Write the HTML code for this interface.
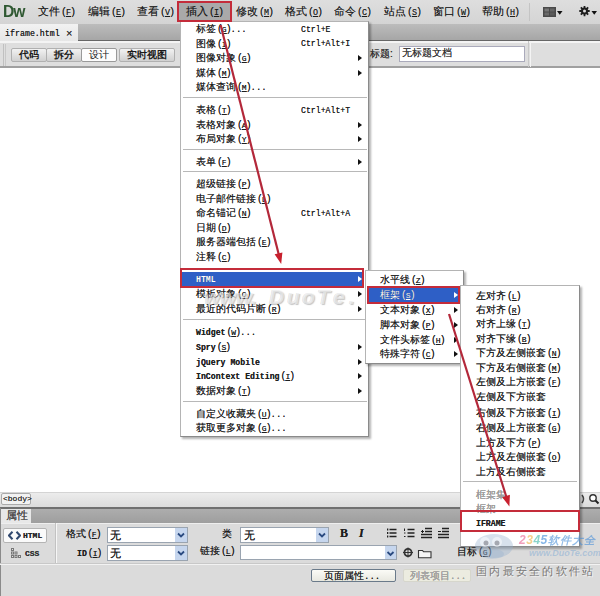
<!DOCTYPE html>
<html><head><meta charset="utf-8">
<style>
*{margin:0;padding:0;box-sizing:border-box}
html,body{width:600px;height:596px;overflow:hidden;background:#fff;font-family:"Liberation Sans",sans-serif;color:#222}
.a{position:absolute}
.t{position:absolute;white-space:nowrap;font-size:10px;line-height:14px;height:14px;color:#1e1e1e;text-shadow:0 0 .6px rgba(0,0,0,.7)}
.m{font-family:"Liberation Mono",monospace}
.k{font-family:"Liberation Sans",sans-serif;font-size:1em;margin-left:2px;letter-spacing:0}
.k u{font-family:"Liberation Mono",monospace;font-size:.8em;text-decoration:underline;margin:0 .5px}
#menubar{left:0;top:0;width:600px;height:24px;background:linear-gradient(#dedede,#d4d4d4)}
#tabrow{left:0;top:24px;width:600px;height:17px;background:linear-gradient(#bcbcbc,#a6a6a6);border-bottom:1px solid #666}
#tab{left:0;top:24px;width:78px;height:17px;background:linear-gradient(#f2f2f2,#e6e6e6)}
#toolbar{left:0;top:41px;width:600px;height:27px;background:#dedede;border-top:2px solid #f4f4f4;border-bottom:2px solid #a0a0a0}
.btn{position:absolute;top:47.5px;height:14px;background:linear-gradient(#f2f2f2,#d0d0d0);border:1px solid #b0b0b0;border-radius:2px;font-size:9.7px;line-height:12px;text-align:center;color:#1a1a1a;font-weight:bold}
#status{left:0;top:492px;width:600px;height:15px;background:linear-gradient(#ececec,#dcdcdc);border-top:1px solid #d4d4d4}
#darkline{left:0;top:507px;width:600px;height:2px;background:#707070}
#ptabrow{left:0;top:509px;width:600px;height:14px;background:linear-gradient(#adadad,#9e9e9e)}
#ptab{left:0;top:509px;width:31px;height:14px;background:#e8e8e8}
#panel{left:0;top:523px;width:600px;height:73px;border-top:1px solid #eeeeee;background:#dbdbdb}
.menu{position:absolute;background:#fff;border:1px solid #b4b4b4;border-right-color:#8a8a8a;border-bottom-color:#8a8a8a;box-shadow:2px 2px 2px rgba(0,0,0,.3)}
.sep{position:absolute;height:2px;border-top:1px solid #b8b8b8;border-bottom:1px solid #fff}
.arr{position:absolute;width:0;height:0;border-top:3px solid transparent;border-bottom:3px solid transparent;border-left:4px solid #111}
.red{position:absolute;border:2px solid #c42c3a}
.blue{position:absolute;background:#2e5fc6}
.dd{position:absolute;background:#fff;border:1px solid #9aa4b0}
.chev{position:absolute;background:#c6d6ee}
.lat{font-family:"Liberation Mono",monospace;font-size:8.2px;font-weight:bold}
.sc{font-family:"Liberation Mono",monospace;font-size:8.2px}
.ell{font-family:"Liberation Mono",monospace;font-size:9px}
</style></head><body>

<!-- menubar -->
<div id="menubar" class="a"></div>
<div class="a" style="left:3px;top:1px;font-size:17px;font-weight:bold;color:#2f5832;line-height:21px;letter-spacing:-1px;transform:scaleX(.92);transform-origin:0 0">Dw</div>
<div class="t" style="left:38px;top:2.5px;font-size:10.5px;line-height:16px;height:16px;text-shadow:0 0 .4px rgba(0,0,0,.5)">文件<span class="k">(<u>F</u>)</span></div>
<div class="t" style="left:88px;top:2.5px;font-size:10.5px;line-height:16px;height:16px;text-shadow:0 0 .4px rgba(0,0,0,.5)">编辑<span class="k">(<u>E</u>)</span></div>
<div class="t" style="left:137px;top:2.5px;font-size:10.5px;line-height:16px;height:16px;text-shadow:0 0 .4px rgba(0,0,0,.5)">查看<span class="k">(<u>V</u>)</span></div>
<div class="a" style="left:177px;top:1px;width:55px;height:21px;background:#a9a9a9"></div>
<div class="t" style="left:186px;top:2.5px;font-size:10.5px;line-height:16px;height:16px;text-shadow:0 0 .4px rgba(0,0,0,.5)">插入<span class="k">(<u>I</u>)</span></div>
<div class="t" style="left:236px;top:2.5px;font-size:10.5px;line-height:16px;height:16px;text-shadow:0 0 .4px rgba(0,0,0,.5)">修改<span class="k">(<u>M</u>)</span></div>
<div class="t" style="left:285px;top:2.5px;font-size:10.5px;line-height:16px;height:16px;text-shadow:0 0 .4px rgba(0,0,0,.5)">格式<span class="k">(<u>O</u>)</span></div>
<div class="t" style="left:334px;top:2.5px;font-size:10.5px;line-height:16px;height:16px;text-shadow:0 0 .4px rgba(0,0,0,.5)">命令<span class="k">(<u>C</u>)</span></div>
<div class="t" style="left:384px;top:2.5px;font-size:10.5px;line-height:16px;height:16px;text-shadow:0 0 .4px rgba(0,0,0,.5)">站点<span class="k">(<u>S</u>)</span></div>
<div class="t" style="left:433px;top:2.5px;font-size:10.5px;line-height:16px;height:16px;text-shadow:0 0 .4px rgba(0,0,0,.5)">窗口<span class="k">(<u>W</u>)</span></div>
<div class="t" style="left:482px;top:2.5px;font-size:10.5px;line-height:16px;height:16px;text-shadow:0 0 .4px rgba(0,0,0,.5)">帮助<span class="k">(<u>H</u>)</span></div>
<div class="a" style="left:529px;top:3px;width:1px;height:18px;background:#c4c4c4"></div>
<svg class="a" style="left:542px;top:6px" width="58" height="12">
<rect x="1" y="1" width="13" height="10" fill="#4a4a4a"/>
<rect x="2.5" y="2.5" width="4.5" height="3" fill="#777"/><rect x="8" y="2.5" width="4.5" height="3" fill="#666"/>
<rect x="2.5" y="6.5" width="4.5" height="3" fill="#6a6a6a"/><rect x="8" y="6.5" width="4.5" height="3" fill="#5a5a5a"/>
<path d="M15 5 h5.5 l-2.75 3.8z" fill="#111"/>
<g transform="translate(42.5 5)"><circle r="3.6" fill="#1e1e1e"/>
<path d="M-0.9 -5.2h1.8v10.4h-1.8z M-5.2 -0.9v1.8h10.4v-1.8z" fill="#1e1e1e"/>
<path d="M-0.9 -5.2h1.8v10.4h-1.8z M-5.2 -0.9v1.8h10.4v-1.8z" fill="#1e1e1e" transform="rotate(45)"/>
<circle r="1.5" fill="#ddd"/></g>
<path d="M49.5 5 h5.5 l-2.75 3.8z" fill="#111"/>
</svg>

<!-- tab row -->
<div id="tabrow" class="a"></div>
<div id="tab" class="a"></div>
<div class="t m" style="left:5px;top:26.5px;font-size:8.3px;line-height:14px;color:#222">iframe.html</div>
<div class="t" style="left:66px;top:26px;font-size:11px;line-height:14px;color:#333">×</div>

<!-- toolbar -->
<div id="toolbar" class="a"></div>
<div class="a" style="left:3px;top:44px;width:1px;height:22px;background:#c0c0c0"></div><div class="a" style="left:5px;top:44px;width:1px;height:22px;background:#c8c8c8"></div>
<div class="btn" style="left:11px;width:36px">代码</div>
<div class="btn" style="left:46px;width:36px">拆分</div>
<div class="btn" style="left:81px;width:36px;background:#fdfdfd;border-color:#999;font-weight:normal">设计</div>
<div class="btn" style="left:119px;width:56px">实时视图</div>
<div class="t" style="left:370px;top:46.5px;font-size:10px;color:#333">标题:</div>
<div class="dd" style="left:399px;top:46px;width:126px;height:16px;border-color:#aab"></div>
<div class="t" style="left:402px;top:45.5px;font-size:10px;color:#333">无标题文档</div>
<div class="a" style="left:528px;top:41px;width:1px;height:26px;background:#c8c8c8"></div>
<div class="a" style="left:530px;top:41px;width:1px;height:26px;background:#f4f4f4"></div>

<!-- status / properties -->
<div id="status" class="a"></div>
<div class="a" style="left:1px;top:493px;width:30px;height:12px;background:#f2f2f2;border:1px solid #aaa;border-radius:2px"></div>
<div class="t m" style="left:3px;top:492px;font-size:8px;line-height:14px;color:#333">&lt;body&gt;</div>
<svg class="a" style="left:580px;top:492px" width="20" height="14"><path d="M2 3 q3 4 0 8" stroke="#444" stroke-width="1.5" fill="none"/><circle cx="13" cy="6" r="3.2" stroke="#333" stroke-width="1.4" fill="#fff"/><path d="M15.5 8.5 l3 3" stroke="#222" stroke-width="2"/></svg>
<div id="darkline" class="a"></div>
<div id="ptabrow" class="a"></div>
<div id="ptab" class="a"></div>
<div class="t" style="left:6px;top:508px;font-size:10.5px;color:#4a4a4a">属性</div>
<div id="panel" class="a"></div>


<!-- panel content -->
<div class="a" style="left:0;top:508px;width:1px;height:88px;background:#8a8a8a"></div>
<div class="a" style="left:3px;top:528px;width:44px;height:15px;background:#fafafa;border:1px solid #b4b4b4;border-radius:2px"></div>
<svg class="a" style="left:8px;top:531px" width="13" height="9"><path d="M4.5 0.8 L1 4.5 L4.5 8.2 M8.5 0.8 L12 4.5 L8.5 8.2" stroke="#30486e" stroke-width="2" fill="none"/></svg>
<div class="t lat" style="left:23px;top:529px;font-size:8px;line-height:14px;color:#222">HTML</div>
<svg class="a" style="left:10px;top:547px" width="13" height="12"><g fill="#777"><rect x="1" y="1" width="3" height="3"/><rect x="1" y="4.5" width="3" height="3"/><rect x="4.5" y="4.5" width="3" height="3"/><rect x="1" y="8" width="3" height="3"/><rect x="4.5" y="8" width="3" height="3"/><rect x="8" y="8" width="3" height="3"/></g><g fill="#e4e4e4"><rect x="2" y="2" width="1" height="1"/><rect x="2" y="5.5" width="1" height="1"/><rect x="5.5" y="5.5" width="1" height="1"/><rect x="2" y="9" width="1" height="1"/><rect x="5.5" y="9" width="1" height="1"/><rect x="9" y="9" width="1" height="1"/></g></svg>
<div class="t lat" style="left:25px;top:547px;font-size:8px;line-height:14px;color:#333">CSS</div>
<div class="a" style="left:55px;top:523px;width:1px;height:40px;background:#c2c2c2"></div>
<div class="a" style="left:56px;top:523px;width:1px;height:40px;background:#f6f6f6"></div>
<div class="a" style="left:0;top:563px;width:600px;height:1px;background:#c8c8c8"></div>
<div class="a" style="left:0;top:564px;width:600px;height:1px;background:#f2f2f2"></div>
<div class="t" style="left:66px;top:527px;font-size:10px">格式<span class="k">(<u>F</u>)</span></div>
<div class="t" style="left:77px;top:546px;font-size:10px"><span class="lat">ID</span><span class="k">(<u>I</u>)</span></div>
<div class="dd" style="left:107px;top:527px;width:81px;height:16px"></div>
<div class="chev" style="left:175px;top:528px;width:12px;height:14px"><svg width="12" height="14"><path d="M3 5.5 L6 8.5 L9 5.5" stroke="#2a4a80" stroke-width="1.8" fill="none"/></svg></div>
<div class="t" style="left:110px;top:528px;font-size:11px">无</div>
<div class="dd" style="left:107px;top:545px;width:81px;height:16px"></div>
<div class="chev" style="left:175px;top:546px;width:12px;height:14px"><svg width="12" height="14"><path d="M3 5.5 L6 8.5 L9 5.5" stroke="#2a4a80" stroke-width="1.8" fill="none"/></svg></div>
<div class="t" style="left:110px;top:546px;font-size:11px">无</div>
<div class="t" style="left:222px;top:527px;font-size:10px">类</div>
<div class="t" style="left:200px;top:544px;font-size:10px">链接<span class="k">(<u>L</u>)</span></div>
<div class="dd" style="left:240px;top:527px;width:89px;height:16px"></div>
<div class="chev" style="left:316px;top:528px;width:12px;height:14px"><svg width="12" height="14"><path d="M3 5.5 L6 8.5 L9 5.5" stroke="#2a4a80" stroke-width="1.8" fill="none"/></svg></div>
<div class="t" style="left:244px;top:528px;font-size:11px">无</div>
<div class="dd" style="left:240px;top:545px;width:157px;height:15px"></div>
<div class="chev" style="left:385px;top:546px;width:11px;height:13px"><svg width="11" height="13"><path d="M2.5 5 L5.5 8 L8.5 5" stroke="#2a4a80" stroke-width="1.8" fill="none"/></svg></div>
<div class="t" style="left:340px;top:526px;font-size:12px;font-weight:bold;font-family:'Liberation Serif',serif">B</div>
<div class="t" style="left:359px;top:526px;font-size:12px;font-weight:bold;font-style:italic;font-family:'Liberation Serif',serif">I</div>
<svg class="a" style="left:386px;top:527px" width="66" height="12"><g stroke="#222" stroke-width="1.3" fill="none">
<path d="M3.5 2.5h7M3.5 6h7M3.5 9.5h7"/><path d="M1 2.5h1.3M1 6h1.3M1 9.5h1.3" stroke-width="2"/>
<path d="M21.5 2.5h7M21.5 6h7M21.5 9.5h7"/><path d="M18.5 1.5v2.5M18 6h1.5M18 9.5h1.5" stroke-width="1"/>
<path d="M39 1.5h7M39 4.5h7M35 7.5h11M35 10.5h11"/><path d="M35 4.5h3M36.5 3v3" stroke-width="1"/>
<path d="M56 1.5h7M56 4.5h7M52 7.5h11M52 10.5h11"/><path d="M52 4.5h3" stroke-width="1"/>
</g></svg>
<svg class="a" style="left:403px;top:547px" width="30" height="12"><g stroke="#333" fill="none"><circle cx="5" cy="5.5" r="3.6" stroke-width="1.8"/><path d="M5 0.5v10M0 5.5h10" stroke-width="1"/>
<path d="M15.5 3.5h4l1 1.2h7.5v6h-12.5z" stroke-width="1.1" fill="#f4f4f4"/></g></svg>
<div class="t" style="left:457px;top:545px;font-size:10px">目标<span class="k">(<u>G</u>)</span></div>
<div class="a" style="left:311px;top:569px;width:85px;height:13px;background:linear-gradient(#fbfbf6,#e8e8e0);border:1px solid #6a7a8a;border-radius:2px"></div>
<div class="t" style="left:324px;top:569px;font-size:10px;line-height:13px">页面属性<span class="ell">...</span></div>
<div class="a" style="left:403px;top:569px;width:68px;height:13px;background:#ecece0;border:1px solid #d6d6cc;border-radius:2px"></div>
<div class="t" style="left:410px;top:569px;font-size:10px;line-height:13px;color:#b4b4b4">列表项目<span class="ell">...</span></div>
<div class="menu" style="left:180px;top:21px;width:189px;height:416px"></div>
<div class="blue" style="left:182px;top:272px;width:182px;height:14px"></div>
<div class="t" style="left:196px;top:22px;">标签<span class="k">(<u>G</u>)</span><span class="ell">...</span></div>
<div class="t sc" style="left:301px;top:22.7px">Ctrl+E</div>
<div class="t" style="left:196px;top:36.5px;">图像<span class="k">(<u>I</u>)</span></div>
<div class="t sc" style="left:301px;top:37.2px">Ctrl+Alt+I</div>
<div class="t" style="left:196px;top:51px;">图像对象<span class="k">(<u>G</u>)</span></div>
<div class="arr" style="left:358px;top:55px;border-left-color:#111"></div>
<div class="t" style="left:196px;top:65.5px;">媒体<span class="k">(<u>M</u>)</span></div>
<div class="arr" style="left:358px;top:69.5px;border-left-color:#111"></div>
<div class="t" style="left:196px;top:80px;">媒体查询<span class="k">(<u>M</u>)</span><span class="ell">...</span></div>
<div class="sep" style="left:183px;top:96.5px;width:184px"></div>
<div class="t" style="left:196px;top:103px;">表格<span class="k">(<u>T</u>)</span></div>
<div class="t sc" style="left:301px;top:103.7px">Ctrl+Alt+T</div>
<div class="t" style="left:196px;top:117.5px;">表格对象<span class="k">(<u>A</u>)</span></div>
<div class="arr" style="left:358px;top:121.5px;border-left-color:#111"></div>
<div class="t" style="left:196px;top:132px;">布局对象<span class="k">(<u>Y</u>)</span></div>
<div class="arr" style="left:358px;top:136px;border-left-color:#111"></div>
<div class="sep" style="left:183px;top:148.5px;width:184px"></div>
<div class="t" style="left:196px;top:154.5px;">表单<span class="k">(<u>F</u>)</span></div>
<div class="arr" style="left:358px;top:158.5px;border-left-color:#111"></div>
<div class="sep" style="left:183px;top:171px;width:184px"></div>
<div class="t" style="left:196px;top:177px;">超级链接<span class="k">(<u>P</u>)</span></div>
<div class="t" style="left:196px;top:191.5px;">电子邮件链接<span class="k">(<u>L</u>)</span></div>
<div class="t" style="left:196px;top:206px;">命名锚记<span class="k">(<u>N</u>)</span></div>
<div class="t sc" style="left:301px;top:206.7px">Ctrl+Alt+A</div>
<div class="t" style="left:196px;top:221px;">日期<span class="k">(<u>D</u>)</span></div>
<div class="t" style="left:196px;top:235px;">服务器端包括<span class="k">(<u>E</u>)</span></div>
<div class="t" style="left:196px;top:250px;">注释<span class="k">(<u>C</u>)</span></div>
<div class="t" style="left:196px;top:272px;color:#fff;"><span class="lat">HTML</span></div>
<div class="arr" style="left:358px;top:276px;border-left-color:#fff"></div>
<div class="t" style="left:196px;top:286.5px;">模板对象<span class="k">(<u>O</u>)</span></div>
<div class="arr" style="left:358px;top:290.5px;border-left-color:#111"></div>
<div class="t" style="left:196px;top:301.5px;">最近的代码片断<span class="k">(<u>R</u>)</span></div>
<div class="arr" style="left:358px;top:305.5px;border-left-color:#111"></div>
<div class="sep" style="left:183px;top:319px;width:184px"></div>
<div class="t" style="left:196px;top:325px;"><span class="lat">Widget</span><span class="k">(<u>W</u>)</span><span class="ell">...</span></div>
<div class="t" style="left:196px;top:340px;"><span class="lat">Spry</span><span class="k">(<u>S</u>)</span></div>
<div class="arr" style="left:358px;top:344px;border-left-color:#111"></div>
<div class="t" style="left:196px;top:354.5px;"><span class="lat">jQuery Mobile</span></div>
<div class="arr" style="left:358px;top:358.5px;border-left-color:#111"></div>
<div class="t" style="left:196px;top:369px;"><span class="lat">InContext Editing</span><span class="k">(<u>I</u>)</span></div>
<div class="arr" style="left:358px;top:373px;border-left-color:#111"></div>
<div class="t" style="left:196px;top:383.5px;">数据对象<span class="k">(<u>T</u>)</span></div>
<div class="arr" style="left:358px;top:387.5px;border-left-color:#111"></div>
<div class="sep" style="left:183px;top:400.5px;width:184px"></div>
<div class="t" style="left:196px;top:407px;">自定义收藏夹<span class="k">(<u>U</u>)</span><span class="ell">...</span></div>
<div class="t" style="left:196px;top:421px;">获取更多对象<span class="k">(<u>G</u>)</span><span class="ell">...</span></div>
<div class="red" style="left:180px;top:268px;width:184px;height:20px"></div>
<div class="menu" style="left:365px;top:270px;width:99px;height:94px"></div>
<div class="blue" style="left:368px;top:288px;width:90px;height:14px"></div>
<div class="t" style="left:380px;top:273px;">水平线<span class="k">(<u>Z</u>)</span></div>
<div class="t" style="left:380px;top:287.5px;color:#fff;">框架<span class="k">(<u>S</u>)</span></div>
<div class="arr" style="left:454px;top:291.5px;border-left-color:#fff"></div>
<div class="t" style="left:380px;top:303px;">文本对象<span class="k">(<u>X</u>)</span></div>
<div class="arr" style="left:454px;top:307px;border-left-color:#111"></div>
<div class="t" style="left:380px;top:317.5px;">脚本对象<span class="k">(<u>P</u>)</span></div>
<div class="arr" style="left:454px;top:321.5px;border-left-color:#111"></div>
<div class="t" style="left:380px;top:332.5px;">文件头标签<span class="k">(<u>H</u>)</span></div>
<div class="arr" style="left:454px;top:336.5px;border-left-color:#111"></div>
<div class="t" style="left:380px;top:346.5px;">特殊字符<span class="k">(<u>C</u>)</span></div>
<div class="arr" style="left:454px;top:350.5px;border-left-color:#111"></div>
<div class="red" style="left:367px;top:286px;width:93px;height:18px"></div>
<div class="menu" style="left:460px;top:285px;width:120px;height:262px"></div>
<div class="t" style="left:476px;top:288.5px;">左对齐<span class="k">(<u>L</u>)</span></div>
<div class="t" style="left:476px;top:302.5px;">右对齐<span class="k">(<u>R</u>)</span></div>
<div class="t" style="left:476px;top:317px;">对齐上缘<span class="k">(<u>T</u>)</span></div>
<div class="t" style="left:476px;top:331.5px;">对齐下缘<span class="k">(<u>B</u>)</span></div>
<div class="t" style="left:476px;top:346px;">下方及左侧嵌套<span class="k">(<u>N</u>)</span></div>
<div class="t" style="left:476px;top:360.5px;">下方及右侧嵌套<span class="k">(<u>M</u>)</span></div>
<div class="t" style="left:476px;top:375px;">左侧及上方嵌套<span class="k">(<u>F</u>)</span></div>
<div class="t" style="left:476px;top:389.5px;">左侧及下方嵌套</div>
<div class="t" style="left:476px;top:406px;">右侧及下方嵌套<span class="k">(<u>I</u>)</span></div>
<div class="t" style="left:476px;top:421px;">右侧及上方嵌套<span class="k">(<u>G</u>)</span></div>
<div class="t" style="left:476px;top:435.5px;">上方及下方<span class="k">(<u>P</u>)</span></div>
<div class="t" style="left:476px;top:449.5px;">上方及左侧嵌套<span class="k">(<u>O</u>)</span></div>
<div class="t" style="left:476px;top:464.5px;">上方及右侧嵌套</div>
<div class="sep" style="left:463px;top:481px;width:114px"></div>
<div class="t" style="left:476px;top:488px;color:#a8a8a8;">框架集</div>
<div class="t" style="left:476px;top:501.5px;color:#a8a8a8;">框架</div>
<div class="t" style="left:476px;top:516px;"><span class="lat">IFRAME</span></div>
<div class="red" style="left:460px;top:510px;width:120px;height:22px"></div>



<div class="a" style="left:177px;top:1px;width:55px;height:21px;border:2px solid #c42c3a"></div>
<div class="a" style="left:204px;top:285px;width:190px;height:26px;overflow:hidden;font:italic bold 21px/24px 'Liberation Sans',sans-serif;color:rgba(255,255,255,.6);text-shadow:1px 1px 1px rgba(90,90,90,.35),-0.5px -0.5px 0.5px rgba(90,90,90,.2)"><span style="position:absolute;left:0px;top:0">w</span><span style="position:absolute;left:16px;top:0">w</span><span style="position:absolute;left:32px;top:0">w</span><span style="position:absolute;left:47px;top:0">.</span><span style="position:absolute;left:65px;top:0">D</span><span style="position:absolute;left:83px;top:0">u</span><span style="position:absolute;left:98px;top:0">o</span><span style="position:absolute;left:113px;top:0">T</span><span style="position:absolute;left:129px;top:0">e</span><span style="position:absolute;left:145px;top:0">.</span></div>
<svg class="a" style="left:472px;top:531px" width="50" height="30"><ellipse cx="22" cy="15" rx="19" ry="12" fill="rgba(150,175,205,.38)"/><ellipse cx="20" cy="23" rx="12" ry="5" fill="rgba(150,175,205,.3)"/><circle cx="13" cy="11" r="5" fill="rgba(255,255,255,.5)"/><circle cx="25" cy="11" r="5" fill="rgba(255,255,255,.5)"/><circle cx="14" cy="12" r="2.5" fill="rgba(80,80,90,.45)"/><circle cx="25" cy="12" r="2.5" fill="rgba(80,80,90,.45)"/></svg>
<div class="a" style="left:519px;top:533px;font:italic bold 12px/14px 'Liberation Sans',sans-serif;white-space:nowrap;opacity:.6;letter-spacing:.5px"><span style="color:#e86090">2</span><span style="color:#f0b040">3</span><span style="color:#40b8a8">4</span><span style="color:#3a88d8">5</span><span style="color:#4a90d8;font-size:11px;letter-spacing:1px">软件大全</span></div>
<div class="a" style="left:529px;top:547px;font:italic bold 9px/12px 'Liberation Sans',sans-serif;white-space:nowrap;color:rgba(110,160,210,.42)">www.DuoTe.com</div>
<div class="a" style="left:476px;top:565px;font:11px/13px 'Liberation Sans',sans-serif;white-space:nowrap;color:rgba(100,100,100,.6);letter-spacing:2.3px;text-shadow:1px 1px 1px rgba(255,255,255,.8),0 0 .5px rgba(60,60,60,.5)">国内最安全的软件站</div>
<svg class="a" style="left:0;top:0" width="600" height="596" viewBox="0 0 600 596">
<line x1="220.6" y1="25" x2="278.7" y2="254.3" stroke="#b3283a" stroke-width="2.2"/>
<polygon points="281.2,264 274.6,254.3 282.4,252.4" fill="#c8202e"/>
<line x1="449" y1="314" x2="506.4" y2="497.0" stroke="#b3283a" stroke-width="2.2"/>
<polygon points="509.4,506.5 502.3,497.2 509.9,494.8" fill="#c8202e"/>
</svg>
</body></html>
